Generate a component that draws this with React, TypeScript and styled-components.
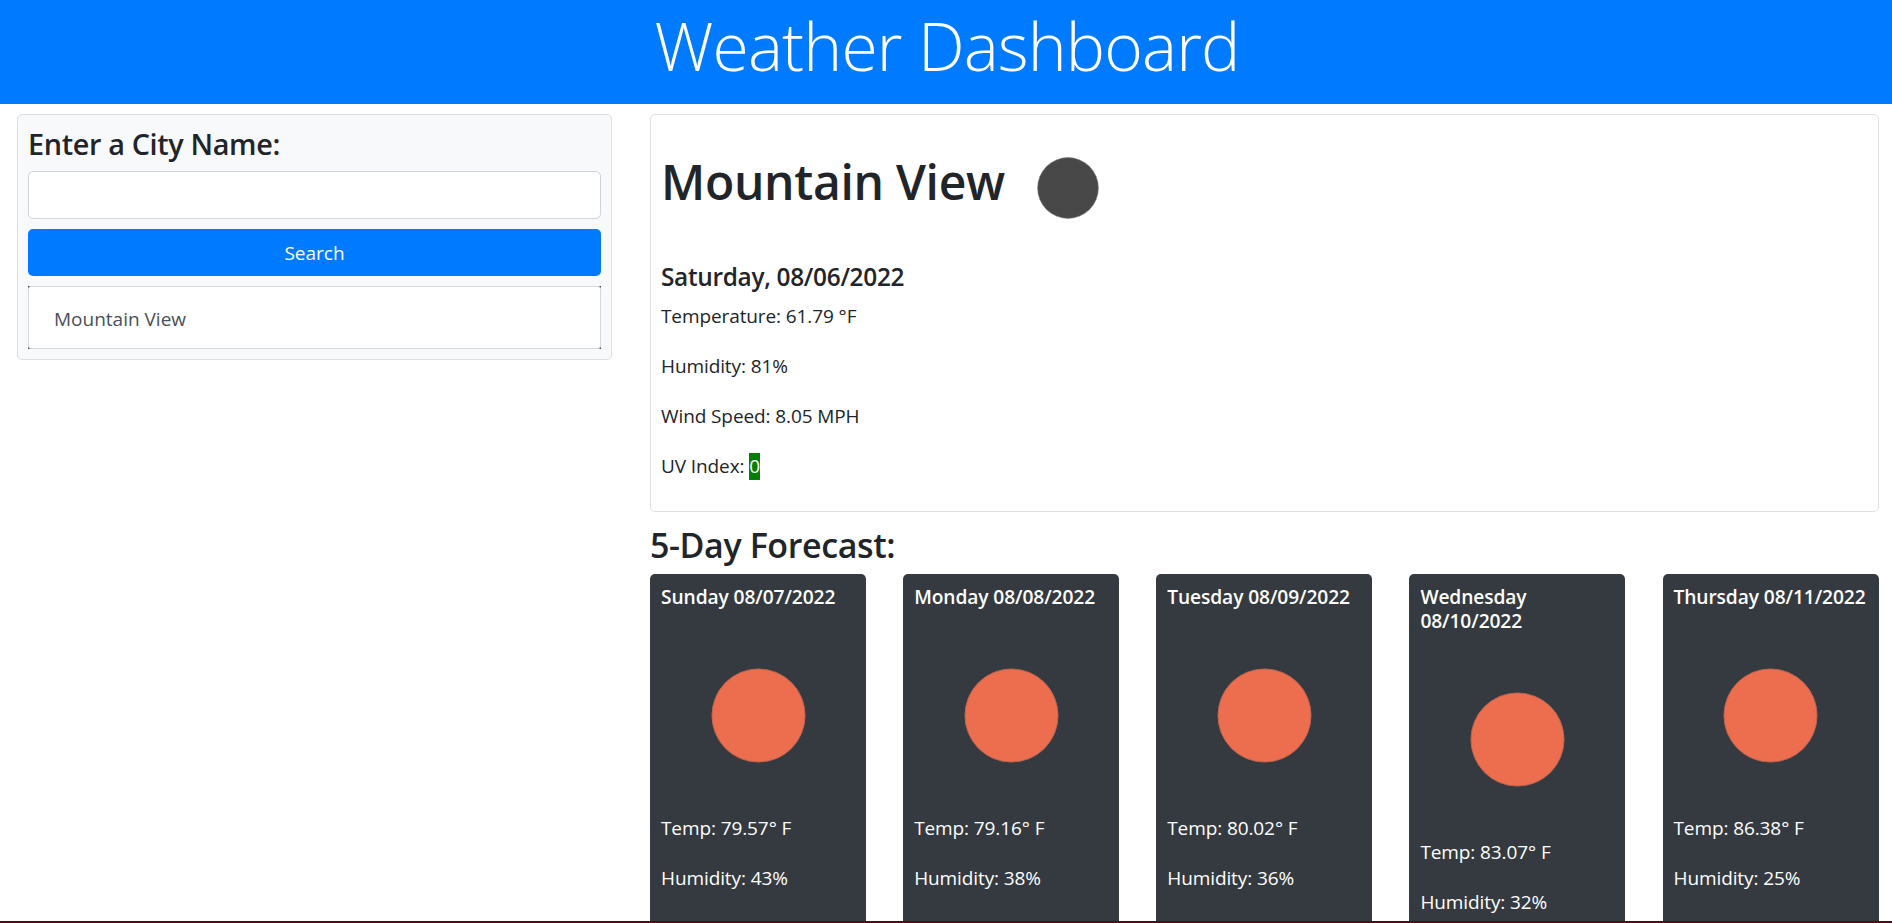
import React from "react";
import styled, { createGlobalStyle } from "styled-components";

const Global = createGlobalStyle`
  html, body { margin: 0; padding: 0; height: 100%; overflow: hidden; background: #fff; }
  * { box-sizing: border-box; }
  body { font-family: "Open Sans", "Noto Sans", sans-serif; color: #212529; font-size: 19px; line-height: 30px; }
`;

const Page = styled.div`
  height: 100vh;
  overflow: hidden;
  position: relative;
`;

const Banner = styled.header`
  height: 104px;
  padding: 0 0 14px 2px;
  background: #007bff;
  display: flex;
  align-items: center;
  justify-content: center;
`;

const BannerTitle = styled.h1`
  margin: 0;
  color: #fff;
  font-weight: 300;
  font-size: 66px;
  line-height: 90px;
  letter-spacing: -0.85px;
`;

const Main = styled.main`
  display: flex;
  gap: 38px;
  padding: 10px 13.5px 0 17px;
  align-items: flex-start;
`;

const SearchPanel = styled.section`
  flex: 0 0 595px;
  height: 246px;
  padding: 8px 10px 0;
  background: #f8f9fa;
  border: 1px solid #dfe0e2;
  border-radius: 5px;
`;

const SearchTitle = styled.h3`
  margin: 0 0 6px;
  font-size: 28.8px;
  line-height: 42px;
  font-weight: 600;
  letter-spacing: -0.35px;
`;

const CityInput = styled.input`
  display: block;
  width: 100%;
  height: 48px;
  background: #fff;
  border: 1px solid #ced4da;
  border-radius: 5px;
  margin-bottom: 10px;
  outline: none;
`;

const SearchButton = styled.button`
  display: block;
  width: 100%;
  height: 47px;
  background: #007bff;
  color: #fff;
  border: 0;
  border-radius: 5px;
  font: inherit;
  margin-bottom: 10px;
`;

const History = styled.ul`
  list-style: none;
  margin: 0;
  padding: 0;
  background: #4b4f55;
`;

const HistoryItem = styled.li`
  height: 63px;
  padding: 3px 25px 0;
  display: flex;
  align-items: center;
  background: #fff;
  color: #495057;
  border: 1px solid #d6d8db;
  border-radius: 3px;
`;

const Content = styled.div`
  flex: 1;
  min-width: 0;
`;

const CurrentCard = styled.section`
  height: 398px;
  padding: 10px;
  border: 1px solid #dfe0e2;
  border-radius: 5px;
`;

const CityRow = styled.div`
  display: flex;
  align-items: center;
  gap: 32px;
  height: 126px;
  margin-bottom: 8px;
`;

const CityName = styled.h1`
  margin: 0 0 12px;
  font-size: 48px;
  line-height: 60px;
  font-weight: 600;
  letter-spacing: -0.3px;
`;

const DateLine = styled.h4`
  margin: 0 0 6px;
  font-size: 24.4px;
  line-height: 36px;
  font-weight: 600;
  letter-spacing: -0.3px;
`;

const Stat = styled.p`
  margin: 0 0 20px;
  letter-spacing: -0.1px;
`;

const UvBadge = styled.span`
  background: #008000;
  color: #fff;
  display: inline-block;
  line-height: 27px;
`;

const ForecastTitle = styled.h3`
  margin: 12px 0 8px;
  font-size: 34px;
  line-height: 42px;
  font-weight: 600;
  letter-spacing: -0.4px;
`;

const ForecastRow = styled.div`
  display: flex;
  justify-content: space-between;
  align-items: flex-start;
`;

const DayCard = styled.article`
  flex: 0 0 216px;
  height: 420px;
  padding: 11px 6px 11px 11px;
  background: #343a40;
  color: #fff;
  border-radius: 5px;
`;

const DayTitle = styled.h5`
  margin: 0;
  font-size: 19.2px;
  line-height: 24px;
  font-weight: 600;
  letter-spacing: -0.1px;
`;

const SunBox = styled.div`
  display: flex;
  justify-content: center;
  align-items: center;
  height: 125px;
  margin: 44px 5px 35px 0;
`;

const DayStat = styled.p`
  margin: 0 0 20px;
  letter-spacing: -0.1px;
`;

const BottomEdge = styled.div`
  position: absolute;
  left: 0;
  right: 0;
  bottom: 0;
  height: 2px;
  background: #4a0f14;
`;

const Disc = ({ size, color, edge }: { size: number; color: string; edge: string }) => (
  <svg width={size} height={size} viewBox="0 0 100 100" aria-hidden="true">
    <circle cx="50" cy="50" r="49" fill={color} stroke={edge} strokeWidth="1" />
  </svg>
);

const days = [
  { title: "Sunday 08/07/2022", temp: "79.57", hum: "43" },
  { title: "Monday 08/08/2022", temp: "79.16", hum: "38" },
  { title: "Tuesday 08/09/2022", temp: "80.02", hum: "36" },
  { title: "Wednesday 08/10/2022", temp: "83.07", hum: "32" },
  { title: "Thursday 08/11/2022", temp: "86.38", hum: "25" },
];

export default function App() {
  return (
    <Page>
      <Global />
      <Banner>
        <BannerTitle>Weather Dashboard</BannerTitle>
      </Banner>
      <Main>
        <SearchPanel>
          <SearchTitle>Enter a City Name:</SearchTitle>
          <CityInput type="text" />
          <SearchButton>Search</SearchButton>
          <History>
            <HistoryItem>Mountain View</HistoryItem>
          </History>
        </SearchPanel>
        <Content>
          <CurrentCard>
            <CityRow>
              <CityName>Mountain View</CityName>
              <Disc size={62} color="#484848" edge="#7a7a7a" />
            </CityRow>
            <DateLine>Saturday, 08/06/2022</DateLine>
            <Stat>Temperature: 61.79 °F</Stat>
            <Stat>Humidity: 81%</Stat>
            <Stat>Wind Speed: 8.05 MPH</Stat>
            <Stat>
              UV Index: <UvBadge>0</UvBadge>
            </Stat>
          </CurrentCard>
          <ForecastTitle>5-Day Forecast:</ForecastTitle>
          <ForecastRow>
            {days.map((d) => (
              <DayCard key={d.title}>
                <DayTitle>{d.title}</DayTitle>
                <SunBox>
                  <Disc size={95} color="#ed6e4e" edge="#b9654f" />
                </SunBox>
                <DayStat>Temp: {d.temp}° F</DayStat>
                <DayStat>Humidity: {d.hum}%</DayStat>
              </DayCard>
            ))}
          </ForecastRow>
        </Content>
      </Main>
      <BottomEdge />
    </Page>
  );
}
